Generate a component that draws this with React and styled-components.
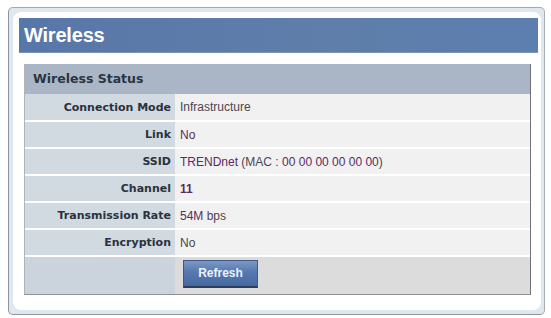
import React from 'react'
import styled, { createGlobalStyle } from 'styled-components'

const GlobalStyle = createGlobalStyle`
  body {
    margin: 0;
    background: #ffffff;
    font-family: "Liberation Sans", Arial, sans-serif;
  }
`

function Val({ $tone, $bold, children }) {
  return (
    <ValueText $tone={$tone} $bold={$bold}>
      {children}
    </ValueText>
  )
}

const rows = [
  { label: 'Connection Mode', value: <Val>Infrastructure</Val> },
  { label: 'Link', value: <Val $tone="purple">No</Val> },
  {
    label: 'SSID',
    value: (
      <>
        <Val $tone="purple">TRENDnet</Val>{' '}<Val>(MAC : </Val>
        <Val $tone="purple">00 00 00 00 00 00</Val>
        <Val>)</Val>
      </>
    ),
  },
  { label: 'Channel', value: <Val $tone="purple" $bold>11</Val> },
  {
    label: 'Transmission Rate',
    value: (
      <>
        <Val $tone="purple">54M</Val>{' '}<Val>bps</Val>
      </>
    ),
  },
  { label: 'Encryption', value: <Val>No</Val> },
]

const App = () => {
  return (
    <>
      <GlobalStyle />
      <Page>
        <Frame>
          <Inner>
            <Title>Wireless</Title>
            <Panel>
              <PanelHeader>Wireless Status</PanelHeader>
              {rows.map((row, index) => (
                <Row key={index}>
                  <Label>{row.label}</Label>
                  <Value>
                    <span>{row.value}</span>
                  </Value>
                </Row>
              ))}
              <Row $last>
                <Label $last />
                <Value $last>
                  <Button>Refresh</Button>
                </Value>
              </Row>
            </Panel>
          </Inner>
        </Frame>
      </Page>
    </>
  )
}

const Page = styled.div`
  padding: 7px 6px 3px 8px;
`

const Frame = styled.div`
  width: 528px;
  height: 298px;
  border: 1px solid #8e959e;
  border-top-color: #a2a9b2;
  border-right-color: #a7adb5;
  border-radius: 5px;
  background: #dfe8ee;
  padding: 4px 3px 4px 4px;
  display: flex;
`

const Inner = styled.div`
  flex: 1;
  background: #ffffff;
  border-radius: 8px;
  padding: 6px 3px 0 6px;
  display: flex;
  flex-direction: column;
`

const Title = styled.div`
  height: 34px;
  background: linear-gradient(90deg, #5877a9 0%, #5f7ea9 60%, #5c7fb0 100%);
  border-bottom: 1px solid #7e93ad;
  color: #ffffff;
  font-weight: bold;
  font-size: 20px;
  line-height: 34px;
  padding-left: 5px;
  letter-spacing: -0.2px;
`

const Panel = styled.div`
  margin: 11px 7px 0 5px;
  border: 1px solid #b0b4b8;
  border-right-color: #6f7378;
  border-bottom-color: #8e9296;
  border-top: none;
  display: flex;
  flex-direction: column;
`

const PanelHeader = styled.div`
  height: 30px;
  background: #aab6c5;
  color: #2b3442;
  font-family: "DejaVu Sans", Verdana, sans-serif;
  font-weight: bold;
  font-size: 12.5px;
  line-height: 30px;
  padding-left: 8px;
`

const Row = styled.div`
  display: grid;
  grid-template-columns: 150px 1fr;
  height: ${(p) => (p.$last ? '37px' : '25px')};
  border-top: 2px solid #ffffff;
  &:nth-child(2) {
    border-top: none;
    height: 26px;
  }
`

const Label = styled.div`
  background: ${(p) => (p.$last ? '#cbd3dc' : '#d1d9e1')};
  color: #2a323d;
  font-family: "DejaVu Sans", Verdana, sans-serif;
  font-weight: bold;
  font-size: 11px;
  padding-right: 4px;
  display: flex;
  align-items: center;
  justify-content: flex-end;
`

const Value = styled.div`
  background: ${(p) => (p.$last ? '#dcdcdc' : '#f1f1f1')};
  display: flex;
  align-items: center;
  padding-left: ${(p) => (p.$last ? '8px' : '5px')};
  font-size: 12px;
  white-space: pre;
`

const ValueText = styled.span`
  color: ${(p) => (p.$tone === 'purple' ? '#5a2a62' : '#4a4650')};
  font-weight: ${(p) => (p.$bold ? 'bold' : 'normal')};
`

const Button = styled.button`
  width: 75px;
  height: 28px;
  margin-bottom: 4px;
  border: 1px solid #3f5a86;
  border-bottom: 2px solid #2c3e5c;
  background: linear-gradient(180deg, #7b98c6 0%, #5678ae 45%, #456aa2 100%);
  color: #eef2f8;
  font-family: "Liberation Sans", Arial, sans-serif;
  font-weight: bold;
  font-size: 12px;
  padding: 0;
`

export default App
